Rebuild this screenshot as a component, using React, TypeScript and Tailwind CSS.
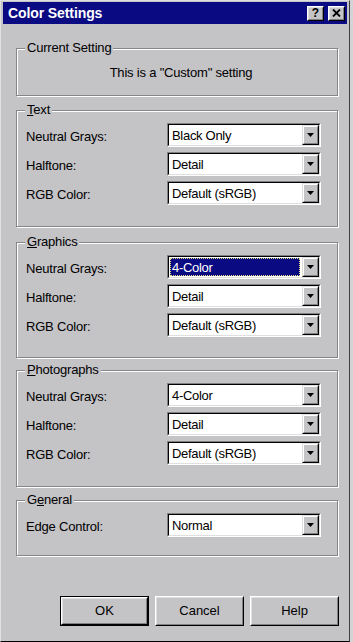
import React from "react";

const FONT = { fontFamily: '"Liberation Sans", Arial, sans-serif' };

function Arrow() {
  return (
    <div className="w-[17px] h-full border border-t-[#dfdfdf] border-l-[#dfdfdf] border-b-black border-r-black">
      <div className="w-full h-full border border-t-white border-l-white border-b-[#808080] border-r-[#808080] bg-[#c4c3c6] flex items-center justify-center">
        <svg width="7" height="4" viewBox="0 0 7 4">
          <polygon points="0,0 7,0 3.5,4" fill="#000" />
        </svg>
      </div>
    </div>
  );
}

function Dropdown({ value, selected }: { value: string; selected?: boolean }) {
  return (
    <div className="w-[154px] h-[24px] border border-t-[#808080] border-l-[#808080] border-r-white border-b-white">
      <div className="h-full border border-t-black border-l-black border-r-[#dfdfdf] border-b-[#dfdfdf] bg-white flex items-stretch">
        {selected ? (
          <div className="flex-1 flex items-center m-[1px] mr-[2px] pl-[1px] bg-[#0a0a82] text-white border border-dotted border-[#e6dd78] text-[13px] tracking-[-0.3px] leading-none">
            {value}
          </div>
        ) : (
          <div className="flex-1 flex items-center pl-[3px] text-[13px] tracking-[-0.3px] leading-none text-black">{value}</div>
        )}
        <Arrow />
      </div>
    </div>
  );
}

function Group({
  label,
  children,
  className,
}: {
  label: React.ReactNode;
  children: React.ReactNode;
  className?: string;
}) {
  return (
    <div
      className={
        "relative ml-[13px] w-[322px] border border-[#868589] shadow-[inset_1px_1px_0_#ffffff,1px_1px_0_#ffffff] " +
        (className ?? "")
      }
    >
      <div className="absolute left-[8px] top-[-9px] px-[2px] bg-[#c4c3c6] text-[13px] tracking-[-0.2px] leading-[16px] text-black">
        {label}
      </div>
      {children}
    </div>
  );
}

function Row({ label, value, selected }: { label: string; value: string; selected?: boolean }) {
  return (
    <div className="flex items-center h-[24px] pl-[9px]">
      <div className="w-[141px] text-[13px] tracking-[-0.2px] text-black leading-none pt-[2px]">{label}</div>
      <Dropdown value={value} selected={selected} />
    </div>
  );
}

function Btn({ children, def }: { children: React.ReactNode; def?: boolean }) {
  const inner = (
    <div className="w-full h-full border border-t-white border-l-white border-b-black border-r-black">
      <div className="w-full h-full border border-t-[#dfdfdf] border-l-[#dfdfdf] border-b-[#808080] border-r-[#808080] flex items-center justify-center text-[13px] text-black">
        {children}
      </div>
    </div>
  );
  return (
    <div className={"w-[89px] h-[30px] " + (def ? "border border-black" : "")}>{inner}</div>
  );
}

function TitleBtn({ children }: { children: React.ReactNode }) {
  return (
    <div className="w-[17px] h-[15px] border border-t-white border-l-white border-b-black border-r-black bg-[#c4c3c6]">
      <div className="w-full h-full border border-t-[#dfdfdf] border-l-[#dfdfdf] border-b-[#808080] border-r-[#808080] flex items-center justify-center">
        {children}
      </div>
    </div>
  );
}

export default function App() {
  return (
    <div className="w-[353px] h-[642px] bg-[#d4d3d6]" style={FONT}>
      <div className="w-[350px] h-[642px] bg-[#c4c3c6] border border-t-[#dfdfdf] border-l-[#dfdfdf] border-b-black border-r-[#404040] pt-[1px] px-[2px] flex flex-col">
        {/* Title bar */}
        <div className="h-[22px] bg-[#0a0a82] flex items-center pl-[5px] pr-[2px]">
          <div className="flex-1 text-white font-bold text-[14px] tracking-[-0.1px] leading-none">Color Settings</div>
          <div className="flex gap-[4px]">
            <TitleBtn>
              <span className="text-[12px] font-bold leading-none text-black">?</span>
            </TitleBtn>
            <TitleBtn>
              <svg width="9" height="8" viewBox="0 0 9 8">
                <path d="M1 0.5 L8 7.5 M8 0.5 L1 7.5" stroke="#000" strokeWidth="1.8" />
              </svg>
            </TitleBtn>
          </div>
        </div>

        {/* Current Setting */}
        <Group label="Current Setting" className="mt-[24px] h-[48px]">
          <div className="h-full flex items-center justify-center pl-[8px] pt-[2px] text-[13px] tracking-[-0.2px] text-black">
            This is a &quot;Custom&quot; setting
          </div>
        </Group>

        <Group
          label={
            <span>
              <span className="underline">T</span>ext
            </span>
          }
          className="mt-[14px] pt-[12px] pb-[21px]"
        >
          <div className="flex flex-col gap-[5px]">
            <Row label="Neutral Grays:" value="Black Only" />
            <Row label="Halftone:" value="Detail" />
            <Row label="RGB Color:" value="Default (sRGB)" />
          </div>
        </Group>

        <Group
          label={
            <span>
              <span className="underline">G</span>raphics
            </span>
          }
          className="mt-[15px] pt-[12px] pb-[20px]"
        >
          <div className="flex flex-col gap-[5px]">
            <Row label="Neutral Grays:" value="4-Color" selected />
            <Row label="Halftone:" value="Detail" />
            <Row label="RGB Color:" value="Default (sRGB)" />
          </div>
        </Group>

        <Group
          label={
            <span>
              <span className="underline">P</span>hotographs
            </span>
          }
          className="mt-[12px] pt-[12px] pb-[21px]"
        >
          <div className="flex flex-col gap-[5px]">
            <Row label="Neutral Grays:" value="4-Color" />
            <Row label="Halftone:" value="Detail" />
            <Row label="RGB Color:" value="Default (sRGB)" />
          </div>
        </Group>

        <Group
          label={
            <span>
              G<span className="underline">e</span>neral
            </span>
          }
          className="mt-[13px] pt-[12px] pb-[18px]"
        >
          <Row label="Edge Control:" value="Normal" />
        </Group>

        <div className="mt-[40px] flex justify-end gap-[6px] pr-[8px]">
          <Btn def>OK</Btn>
          <Btn>Cancel</Btn>
          <Btn>Help</Btn>
        </div>
      </div>
    </div>
  );
}
